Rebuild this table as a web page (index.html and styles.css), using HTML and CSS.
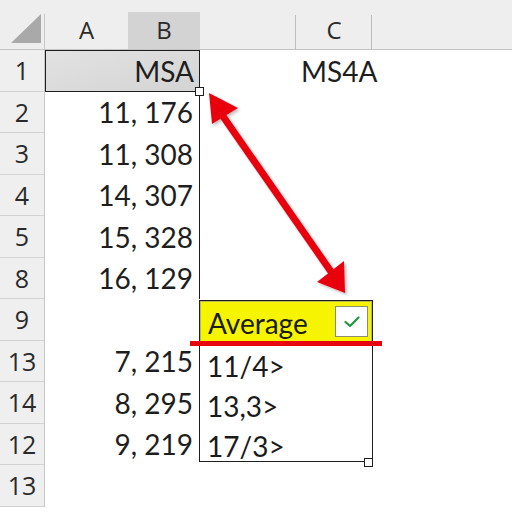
FILE: index.html
```html
<!DOCTYPE html>
<html>
<head>
<meta charset="utf-8">
<link rel="stylesheet" href="styles.css">
</head>
<body>
<div class="sheet">
  <div class="grid">
    <div class="corner"><span class="tri"></span></div>
    <div class="colhead">A</div>
    <div class="colhead active">B</div>
    <div class="colhead sep"></div>
    <div class="colhead sep">C</div>
    <div class="colhead"></div>

    <div class="rowhead">1</div>
    <div class="cell ab sel">MSA<span class="handle"></span></div>
    <div class="cell"></div>
    <div class="cell left">MS4A</div>
    <div class="cell"></div>

    <div class="rowhead">2</div>
    <div class="cell ab edge">11, 176</div>
    <div class="cell"></div><div class="cell"></div><div class="cell"></div>

    <div class="rowhead">3</div>
    <div class="cell ab edge">11, 308</div>
    <div class="cell"></div><div class="cell"></div><div class="cell"></div>

    <div class="rowhead">4</div>
    <div class="cell ab edge">14, 307</div>
    <div class="cell"></div><div class="cell"></div><div class="cell"></div>

    <div class="rowhead">5</div>
    <div class="cell ab edge">15, 328</div>
    <div class="cell"></div><div class="cell"></div><div class="cell"></div>

    <div class="rowhead">8</div>
    <div class="cell ab edge">16, 129</div>
    <div class="cell"></div><div class="cell"></div><div class="cell"></div>

    <div class="rowhead">9</div>
    <div class="cell ab"></div>
    <div class="cell"></div><div class="cell"></div><div class="cell"></div>

    <div class="rowhead">13</div>
    <div class="cell ab">7, 215</div>
    <div class="cell"></div><div class="cell"></div><div class="cell"></div>

    <div class="rowhead">14</div>
    <div class="cell ab">8, 295</div>
    <div class="cell"></div><div class="cell"></div><div class="cell"></div>

    <div class="rowhead">12</div>
    <div class="cell ab">9, 219</div>
    <div class="cell"></div><div class="cell"></div><div class="cell"></div>

    <div class="rowhead">13</div>
    <div class="cell ab"></div>
    <div class="cell"></div><div class="cell"></div><div class="cell"></div>
  </div>

  <div class="dropdown">
    <div class="dd-head">
      <span class="dd-title">Average</span>
      <span class="check">
        <svg width="16" height="12" viewBox="0 0 16 12"><path d="M1.5 6 L6 10 L14.5 1.5" fill="none" stroke="#1f9a3c" stroke-width="2.2" stroke-linecap="round" stroke-linejoin="round"/></svg>
      </span>
    </div>
    <div class="dd-item first">11/4&gt;</div>
    <div class="dd-item">13,3&gt;</div>
    <div class="dd-item">17/3&gt;</div>
    <span class="handle dd-handle"></span>
  </div>
  <div class="redline"></div>

  <svg class="arrow" width="512" height="512" viewBox="0 0 512 512">
    <defs>
      <filter id="sh" x="-20%" y="-20%" width="140%" height="140%">
        <feDropShadow dx="2" dy="2" stdDeviation="1.5" flood-color="#000" flood-opacity="0.25"/>
      </filter>
    </defs>
    <g filter="url(#sh)" fill="#e8060e">
      <line x1="220" y1="112" x2="334" y2="276" stroke="#e8060e" stroke-width="7"/>
      <polygon points="209,93 238,108 212,124"/>
      <polygon points="345,293 317,282 344,261"/>
    </g>
  </svg>
</div>
</body>
</html>
```

FILE: styles.css
```css
* { box-sizing: border-box; }
html, body {
  margin: 0;
  padding: 0;
  width: 512px;
  height: 512px;
  overflow: hidden;
  background: #ffffff;
}
.sheet {
  position: relative;
  width: 512px;
  height: 512px;
  font-family: "Lato", "Open Sans", sans-serif;
  color: #1e1e1e;
}
.grid {
  display: grid;
  grid-template-columns: 45px 83px 72px 96px 76px 1fr;
  grid-template-rows: 50px repeat(11, 41.5px);
}
.corner {
  background: #eeeeee;
  border-bottom: 1px solid #c4c4c4;
  position: relative;
}
.corner::after {
  content: "";
  position: absolute;
  right: 0;
  top: 14px;
  bottom: 0;
  width: 1px;
  background: #c8c8c8;
}
.tri {
  position: absolute;
  left: 11px;
  top: 14px;
  width: 0;
  height: 0;
  border-left: 30px solid transparent;
  border-bottom: 29px solid #a9a9a9;
}
.colhead {
  background: #eeeeee;
  border-bottom: 1px solid #c4c4c4;
  font-family: "Open Sans", sans-serif;
  font-size: 24px;
  color: #2a2a2a;
  display: flex;
  align-items: center;
  justify-content: center;
  padding-top: 9px;
  position: relative;
}
.colhead.active {
  background: linear-gradient(to bottom, #eeeeee 0, #eeeeee 12px, #d3d3d3 12px);
}
.colhead.sep::after {
  content: "";
  position: absolute;
  right: 0;
  top: 15px;
  bottom: 0;
  width: 1px;
  background: #bdbdbd;
}

.rowhead {
  background: #efefef;
  border-right: 1px solid #c8c8c8;
  border-bottom: 1px solid #d2d2d2;
  font-family: "Open Sans", sans-serif;
  font-size: 25px;
  color: #2a2a2a;
  display: flex;
  align-items: center;
  justify-content: center;
}
.cell {
  font-size: 28px;
  display: flex;
  align-items: center;
  justify-content: flex-end;
  padding-right: 6px;
  white-space: nowrap;
}
.cell.ab {
  grid-column: span 2;
  border-right: 1.5px solid transparent;
}
.cell.left {
  justify-content: flex-start;
  padding-left: 5px;
}
.cell.sel {
  position: relative;
  background: linear-gradient(to bottom right, #e2e2e2, #d4d4d4);
  border: 1.5px solid #1e1e1e;
  padding-right: 5px;
}
.cell.edge { border-right: 1.5px solid #1e1e1e; }

.handle {
  position: absolute;
  width: 9px;
  height: 9px;
  background: #ffffff;
  border: 1.2px solid #1e1e1e;
  right: -5px;
  bottom: -5px;
}

.dropdown {
  position: absolute;
  left: 199px;
  top: 300px;
  width: 174px;
  height: 162px;
  border: 1.2px solid #1e1e1e;
  background: #ffffff;
}
.dd-head {
  height: 41px;
  background: #f6f400;
  border: 1px solid #b9b84a;
  display: flex;
  align-items: center;
  justify-content: space-between;
  padding: 0 3px 0 7px;
}
.dd-title {
  font-size: 28px;
  color: #1a1a1a;
  padding-top: 2px;
}
.check {
  width: 33px;
  height: 31px;
  background: #ffffff;
  border: 1px solid #8d8d6a;
  display: flex;
  align-items: center;
  justify-content: center;
}
.dd-item {
  height: 40px;
  font-size: 28px;
  padding-left: 7px;
  display: flex;
  align-items: center;
  color: #1a1a1a;
}
.dd-item.first { margin-top: 4px; }
.dd-handle {
  right: -1px;
  bottom: -6px;
}
.redline {
  position: absolute;
  left: 190px;
  top: 341px;
  width: 192px;
  height: 5px;
  background: #e8060e;
}
.arrow {
  position: absolute;
  left: 0;
  top: 0;
  pointer-events: none;
}
```
